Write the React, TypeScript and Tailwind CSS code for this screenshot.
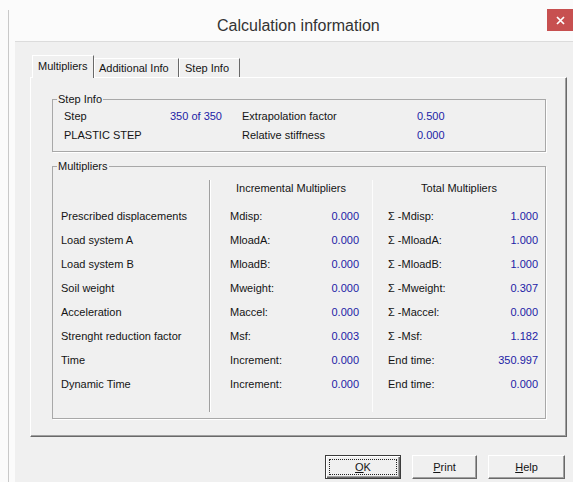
const rows = [
  { label: 'Prescribed displacements', inc: 'Mdisp:', incVal: '0.000', tot: 'Σ -Mdisp:', totVal: '1.000' },
  { label: 'Load system A', inc: 'MloadA:', incVal: '0.000', tot: 'Σ -MloadA:', totVal: '1.000' },
  { label: 'Load system B', inc: 'MloadB:', incVal: '0.000', tot: 'Σ -MloadB:', totVal: '1.000' },
  { label: 'Soil weight', inc: 'Mweight:', incVal: '0.000', tot: 'Σ -Mweight:', totVal: '0.307' },
  { label: 'Acceleration', inc: 'Maccel:', incVal: '0.000', tot: 'Σ -Maccel:', totVal: '0.000' },
  { label: 'Strenght reduction factor', inc: 'Msf:', incVal: '0.003', tot: 'Σ -Msf:', totVal: '1.182' },
  { label: 'Time', inc: 'Increment:', incVal: '0.000', tot: 'End time:', totVal: '350.997' },
  { label: 'Dynamic Time', inc: 'Increment:', incVal: '0.000', tot: 'End time:', totVal: '0.000' },
]

export default function App() {
  return (
    <div className="w-[573px] h-[482px] overflow-hidden bg-[#fbfbfb] font-['Liberation_Sans',Arial,sans-serif] text-[11px] leading-[13px] text-[#141414]">
      <div className="ml-[8px] mt-[10px] h-[472px] border-l border-[#c9c9c9] flex flex-col">
        {/* Title bar */}
        <div className="h-[31px] flex items-center">
          <span className="pl-[208px] text-[16px] leading-[20px] text-[#333]">Calculation information</span>
          <button className="ml-auto self-start -mt-px w-[26px] h-[22px] bg-[#c75050] flex items-center justify-center">
            <svg width="9" height="9" viewBox="0 0 9 9">
              <path d="M1 1L8 8M8 1L1 8" stroke="#fff" strokeWidth="1.7" />
            </svg>
          </button>
        </div>

        <div className="ml-[6px] flex-1 bg-[#f0f0f0] border-t border-[#dcdcdc] flex flex-col">
          {/* Tabs */}
          <div className="mt-[13px] pl-[17px] h-[22px] flex items-end">
            <div className="relative z-10 -mb-px h-[23px] w-[62px] pl-[5px] pt-[4px] bg-[#f0f0f0] border-t border-l border-white border-r border-r-[#696969]">
              Multipliers
            </div>
            <div className="h-[19px] w-[85px] pl-[4px] pt-[3px] border-t border-l border-white border-r border-r-[#696969]">
              Additional Info
            </div>
            <div className="h-[19px] w-[61px] pl-[5px] pt-[3px] border-t border-l border-white border-r border-r-[#696969]">
              Step Info
            </div>
          </div>

          {/* Tab page */}
          <div className="ml-[15px] w-[537px] h-[360px] pl-[21px] border-t border-l border-white border-r border-b border-r-[#696969] border-b-[#696969] shadow-[inset_-1px_-1px_0_#a0a0a0]">
            <fieldset className="mt-[15px] w-[494px] border border-[#a8a8a8] shadow-[1px_1px_0_#fff] pt-px pb-[6px]">
              <legend className="ml-[4px] px-px">Step Info</legend>
              <div className="flex h-[19px] items-center pl-[11px]">
                <span className="w-[106px]">Step</span>
                <span className="w-[52px] text-right text-[#1c1ca6]">350 of 350</span>
                <span className="ml-[20px] w-[175px]">Extrapolation factor</span>
                <span className="text-[#1c1ca6]">0.500</span>
              </div>
              <div className="flex h-[19px] items-center pl-[11px]">
                <span className="w-[178px]">PLASTIC STEP</span>
                <span className="w-[175px]">Relative stiffness</span>
                <span className="text-[#1c1ca6]">0.000</span>
              </div>
            </fieldset>

            <fieldset className="mt-[8px] w-[494px] border border-[#a8a8a8] shadow-[1px_1px_0_#fff] pt-[7px] pb-[6px]">
              <legend className="ml-[4px] px-px">Multipliers</legend>
              <div className="grid grid-cols-[156px_163px_1fr]">
                <div className="pl-[8px] pt-[24px] pb-[16px]">
                  {rows.map((r) => (
                    <div key={r.label} className="h-[24px] flex items-center">{r.label}</div>
                  ))}
                </div>
                <div className="border-l border-[#a0a0a0] shadow-[inset_1px_0_0_#fff] pl-[20px] pr-[13px] pb-[16px]">
                  <div className="h-[16px] flex items-center justify-center -ml-[20px] -mr-[13px]">Incremental Multipliers</div>
                  <div className="mt-[8px]">
                    {rows.map((r, i) => (
                      <div key={i} className="h-[24px] flex items-center justify-between">
                        <span>{r.inc}</span>
                        <span className="text-[#1c1ca6]">{r.incVal}</span>
                      </div>
                    ))}
                  </div>
                </div>
                <div className="border-l border-[#fcfcfc] pl-[15px] pr-[7px] pb-[16px]">
                  <div className="h-[16px] flex items-center justify-center -ml-[15px] -mr-[7px]">Total Multipliers</div>
                  <div className="mt-[8px]">
                    {rows.map((r, i) => (
                      <div key={i} className="h-[24px] flex items-center justify-between">
                        <span>{r.tot}</span>
                        <span className="text-[#1c1ca6]">{r.totVal}</span>
                      </div>
                    ))}
                  </div>
                </div>
              </div>
            </fieldset>
          </div>

          {/* Dialog buttons */}
          <div className="mt-[18px] pr-[8px] flex justify-end gap-[11px]">
            <button className="w-[76px] h-[24px] flex items-center justify-center bg-[#f0f0f0] border border-[#3c3c3c] shadow-[inset_1px_1px_0_#fff,inset_-1px_-1px_0_#696969,inset_-2px_-2px_0_#a0a0a0] outline-1 outline-dotted outline-[#222] outline-offset-[-5px]">
              <span><u>O</u>K</span>
            </button>
            <button className="w-[65px] h-[24px] flex items-center justify-center bg-[#f0f0f0] border border-t-white border-l-white border-r-[#696969] border-b-[#696969] shadow-[inset_-1px_-1px_0_#a0a0a0]">
              <span><u>P</u>rint</span>
            </button>
            <button className="w-[77px] h-[24px] flex items-center justify-center bg-[#f0f0f0] border border-t-white border-l-white border-r-[#696969] border-b-[#696969] shadow-[inset_-1px_-1px_0_#a0a0a0]">
              <span><u>H</u>elp</span>
            </button>
          </div>
        </div>
      </div>
    </div>
  )
}
